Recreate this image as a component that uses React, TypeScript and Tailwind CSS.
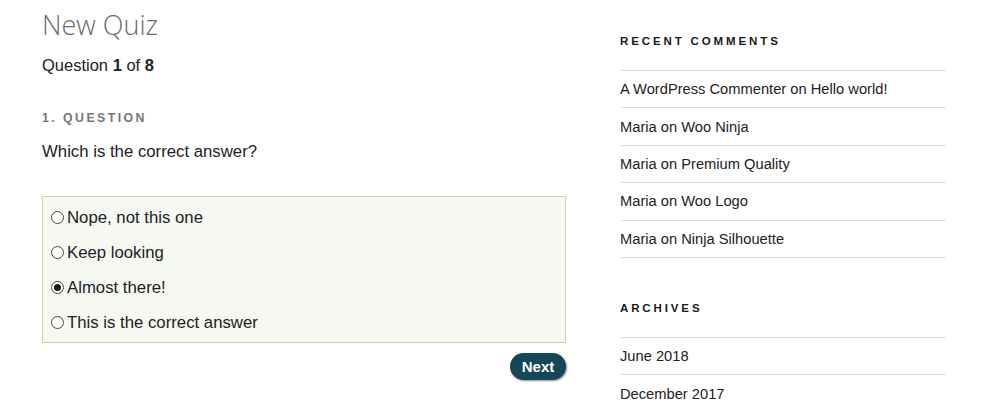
import React from "react";

const font = { fontFamily: '"Liberation Sans", Arial, sans-serif' };

function Radio({ checked }: { checked?: boolean }) {
  return (
    <span className="w-[13px] h-[13px] rounded-full border border-[#444] bg-white flex items-center justify-center shrink-0">
      {checked && <span className="w-[7px] h-[7px] rounded-full bg-[#1a1a1a]" />}
    </span>
  );
}

const options = [
  { t: "Nope, not this one" },
  { t: "Keep looking" },
  { t: "Almost there!", c: true },
  { t: "This is the correct answer" },
];

const comments: [string, string][] = [
  ["A WordPress Commenter", "Hello world!"],
  ["Maria", "Woo Ninja"],
  ["Maria", "Premium Quality"],
  ["Maria", "Woo Logo"],
  ["Maria", "Ninja Silhouette"],
];

export default function App() {
  return (
    <div className="w-[1000px] h-[410px] bg-white overflow-hidden text-[#222]" style={font}>
      <div className="flex pl-[42px]">
        <main className="w-[524px] flex flex-col">
          <h1
            className="text-[27px] leading-[32px] font-light text-[#6b6b6b] mt-[9px]"
            style={{ fontFamily: '"Open Sans", "Liberation Sans", sans-serif' }}
          >
            New Quiz
          </h1>
          <p className="text-[16.5px] leading-[24px] mt-[12px]">
            Question <b>1</b> of <b>8</b>
          </p>
          <h3 className="text-[12.3px] leading-[16px] font-bold tracking-[0.2em] text-[#767676] mt-[33px]">
            1. QUESTION
          </h3>
          <p className="text-[16.75px] leading-[24px] mt-[14px]">Which is the correct answer?</p>
          <div className="mt-[32px] border border-[#c6d6a4] bg-[#f6f8f2] pl-[8px] pt-[3px] pb-[2px] flex flex-col">
            {options.map((o) => (
              <label key={o.t} className="h-[35px] flex items-center gap-[3px] text-[16.75px]">
                <Radio checked={o.c} />
                <span>{o.t}</span>
              </label>
            ))}
          </div>
          <div className="flex justify-end mt-[10px]">
            <button className="h-[27px] w-[56px] rounded-full bg-[#164759] text-white font-bold text-[15px] leading-[27px] shadow-[1px_1px_2px_rgba(0,0,0,0.45)]">
              Next
            </button>
          </div>
        </main>
        <aside className="w-[326px] ml-[54px] flex flex-col">
          <h2 className="text-[11.5px] leading-[14px] font-black tracking-[0.25em] text-[#1a1a1a] mt-[34px]">
            RECENT COMMENTS
          </h2>
          <ul className="mt-[22px] border-b border-[#dddddd]">
            {comments.map(([a, b]) => (
              <li key={b} className="h-[37.4px] border-t border-[#dddddd] flex items-center text-[14.7px]">
                {a} on {b}
              </li>
            ))}
          </ul>
          <h2 className="text-[11.5px] leading-[14px] font-black tracking-[0.25em] text-[#1a1a1a] mt-[43px]">
            ARCHIVES
          </h2>
          <ul className="mt-[22px]">
            {["June 2018", "December 2017"].map((t) => (
              <li key={t} className="h-[37.4px] border-t border-[#dddddd] flex items-center text-[14.7px]">
                {t}
              </li>
            ))}
          </ul>
        </aside>
      </div>
    </div>
  );
}
